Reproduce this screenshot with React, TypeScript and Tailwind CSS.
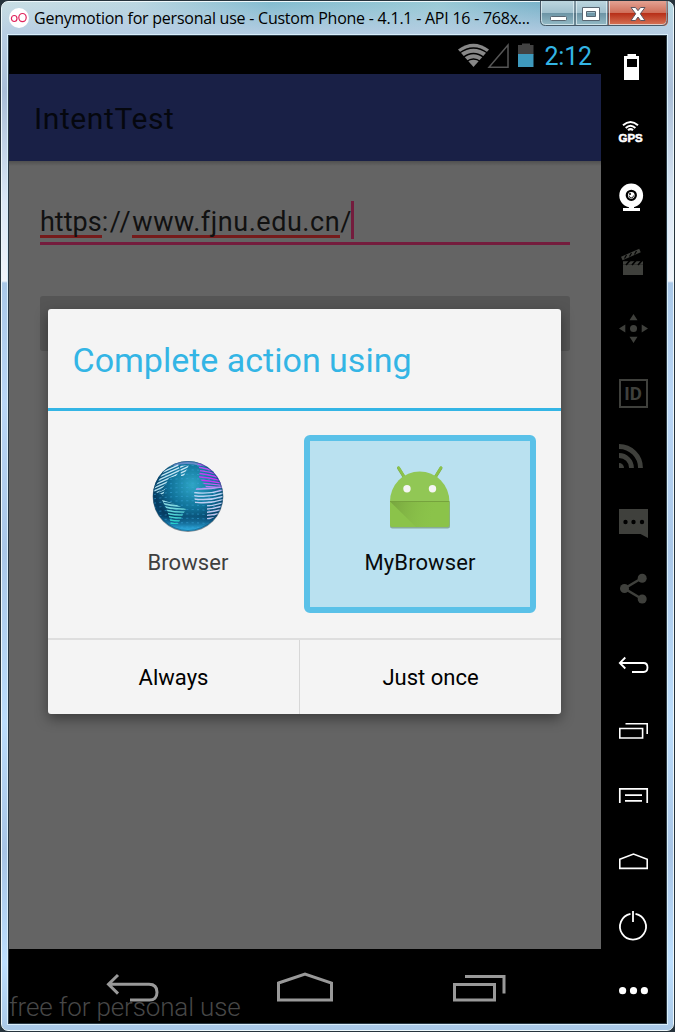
import type { ReactNode } from "react";

function Tool({ top, height, label, children }: { top: number; height: number; label: string; children: ReactNode }) {
  return (
    <button aria-label={label} className="block shrink-0">
      <svg width={65} height={height} viewBox={`601 ${top} 65 ${height}`} className="block" fill="none">
        {children}
      </svg>
    </button>
  );
}

const DIM = "#3f403c";

function Sidebar() {
  return (
    <aside className="flex w-[65px] flex-col bg-black">
      <Tool top={36} height={64} label="Battery">
        <path fill="#fff" fillRule="evenodd" d="M627.5 54h8.5v2H639v24h-15V56h3.5zM627 59v8h10v-8z" />
      </Tool>
      <Tool top={100} height={65} label="GPS">
        <g stroke="#fff" strokeWidth="2">
          <path d="M623 125.300Q630.500 118.600 638 125.300M625.700 128Q630.500 123.600 635.400 128M628 130.300Q630.500 128 633 130.300" />
        </g>
        <text x="618.500" y="142" fill="#fff" fontSize="11" fontWeight="900" textLength="24.300" lengthAdjust="spacingAndGlyphs" stroke="#fff" strokeWidth=".5" fontFamily="Liberation Sans, sans-serif">GPS</text>
      </Tool>
      <Tool top={165} height={66} label="Camera">
        <circle cx="631.200" cy="195.500" r="11.900" fill="#fff" />
        <path fill="#fff" d="M629 205h5v3h6v3h-17v-3h6z" />
        <circle cx="631.300" cy="195.300" r="4.500" stroke="#000" strokeWidth="2.300" />
        <path d="M629 195.500a2.300 2.300 0 0 0 4.600 0" stroke="#000" strokeWidth=".8" />
        <circle cx="630" cy="194" r="1" fill="#000" />
      </Tool>
      <Tool top={231} height={65} label="Capture">
        <path fill={DIM} d="M623 265h20v10h-20z" />
        <path stroke={DIM} strokeWidth="3.500" d="M623 263h20" />
        <path stroke="#000" strokeWidth="1.700" d="M626 265l4-4.500M632 265l4-4.500M638 265l4-4.500" />
        <path stroke={DIM} strokeWidth="3.800" d="M621.800 258.500L640 250.500" />
        <path stroke="#000" strokeWidth="1.200" d="M624.500 258.500l2-3.500M629.500 256.500l2-3.500M634.500 254.500l2-3.500" />
      </Tool>
      <Tool top={296} height={65} label="Move">
        <g fill={DIM}>
          <circle cx="633.500" cy="328.500" r="3.500" />
          <path d="M633.500 314l4 6.300h-8zM633.500 343l4-6.300h-8zM619 328.500l6.300-4v8zM648 328.500l-6.300-4v8z" />
        </g>
      </Tool>
      <Tool top={361} height={65} label="Identifiers">
        <rect x="620" y="380" width="27" height="27" stroke={DIM} strokeWidth="2" />
        <text x="624.200" y="400" fill={DIM} fontSize="18.500" fontWeight="700" textLength="17.600" lengthAdjust="spacingAndGlyphs" fontFamily="Roboto, sans-serif">ID</text>
      </Tool>
      <Tool top={426} height={65} label="Network">
        <path fill={DIM} d="M619 463a5 5 0 0 1 5 5h-5z" />
        <path stroke={DIM} strokeWidth="4.800" d="M619 455.500A12.500 12.500 0 0 1 631.500 468M619 446.500A21.500 21.500 0 0 1 640.500 468" />
      </Tool>
      <Tool top={491} height={65} label="Phone">
        <path fill={DIM} d="M619 509h29v29l-7.500-4H619z" />
        <g fill="#000">
          <circle cx="625.500" cy="522" r="2.200" />
          <circle cx="633.500" cy="522" r="2.200" />
          <circle cx="642" cy="522" r="2.200" />
        </g>
      </Tool>
      <Tool top={556} height={70} label="Share">
        <path stroke={DIM} strokeWidth="2.500" d="M642 578l-17.500 10.500L642 599" />
        <g fill={DIM}>
          <circle cx="624.500" cy="588.500" r="4.500" />
          <circle cx="642.200" cy="578.200" r="4.500" />
          <circle cx="642.200" cy="599" r="4.500" />
        </g>
      </Tool>
      <Tool top={626} height={72} label="Back">
        <path stroke="#fff" strokeWidth="1.800" d="M625.300 657.500l-5.500 5.500 5.500 5.500M620 663h23.500q4 0 4 4.500t-4 4.500H632" />
      </Tool>
      <Tool top={698} height={66} label="Recent apps">
        <path stroke="#fff" strokeWidth="1.600" d="M619.800 728.500h22.800v9.500h-22.800zM625.500 723.800h21.700V734" />
      </Tool>
      <Tool top={764} height={65} label="Menu">
        <path stroke="#fff" strokeWidth="1.700" d="M619.800 803v-14.200h27.400V803M625 795.200h17M625 800.800h17" />
      </Tool>
      <Tool top={829} height={65} label="Home">
        <path stroke="#fff" strokeWidth="1.600" d="M619.800 859.200l13.700-5.200 13.700 5.200v9.200h-27.400z" />
      </Tool>
      <Tool top={894} height={65} label="Power">
        <path stroke="#fff" strokeWidth="1.800" d="M630.500 913.900a13 13 0 1 0 5 0M633 911v11" />
      </Tool>
      <Tool top={959} height={64} label="More">
        <g fill="#fff">
          <circle cx="622.600" cy="990.700" r="3.600" />
          <circle cx="633.500" cy="990.700" r="3.600" />
          <circle cx="644.400" cy="990.700" r="3.600" />
        </g>
      </Tool>
    </aside>
  );
}

function TitleBar() {
  return (
    <header className="flex h-[32px] items-start pl-[7px]">
      <svg width="20" height="20" viewBox="0 0 20 20" className="mt-[6px] shrink-0" fill="none">
        <circle cx="10" cy="10" r="10" fill="#fff" />
        <g stroke="#e0245c" strokeWidth="1.200">
          <ellipse cx="5.200" cy="10.500" rx="2.800" ry="3" />
          <ellipse cx="13.500" cy="9.600" rx="3.700" ry="4.100" />
        </g>
      </svg>
      <h1 className="mt-[5px] ml-[5px] w-[505px] whitespace-nowrap font-['Open_Sans',sans-serif] text-[16px] leading-[22px] tracking-[-0.24px] text-black">
        Genymotion for personal use - Custom Phone - 4.1.1 - API 16 - 768x...
      </h1>
      <svg width="129" height="26" viewBox="0 0 129 26" className="-mt-px shrink-0" fill="none">
        <defs>
          <linearGradient id="pane" x2="0" y2="1">
            <stop stopColor="#bcd6df" />
            <stop offset=".48" stopColor="#9fbfcc" />
            <stop offset=".5" stopColor="#6d95a6" />
            <stop offset="1" stopColor="#97bdc8" />
          </linearGradient>
          <linearGradient id="close" x2="0" y2="1">
            <stop stopColor="#e3a293" />
            <stop offset=".46" stopColor="#d0705b" />
            <stop offset=".5" stopColor="#b83019" />
            <stop offset="1" stopColor="#d97a5c" />
          </linearGradient>
        </defs>
        <path fill="url(#pane)" d="M1 0h69v25H6q-5 0-5-5z" />
        <path fill="url(#close)" d="M69 0h60v20q0 5-5 5H69z" />
        <path stroke="#e6f2f6" opacity=".7" d="M2.500 0v19q0 4.500 4 4.500H34.500V0M37.500 0v23.500H67.500V0M70.500 0v23.500H123q4.500 0 4.500-4.500V0" />
        <path stroke="#475967" d="M1.500 0v19.500q0 5 5 5H123q5 0 5-5V0M36 0v24.500M69 0v24.500" />
        <rect x="11.500" y="15.500" width="16" height="4" rx="1" fill="#fff" stroke="#596672" />
        <path fill="#fff" stroke="#596672" fillRule="evenodd" d="M43.500 6.500h17v13h-17zM47.500 10.500v5h9v-5z" />
        <path fill="#fff" stroke="#5d5660" strokeLinejoin="round" d="M92 6.500h4.500l2.500 3.200 2.500-3.200h4.500l-4.700 6.300 4.700 6.700h-4.500L99 16l-2.500 3.500H92l4.700-6.700z" />
      </svg>
    </header>
  );
}

function StatusBar() {
  return (
    <div className="flex h-[38px] items-start bg-black">
      <svg width="82" height="38" viewBox="456 36 82 38" className="ml-[447px] shrink-0" fill="none">
        <path fill="#888" d="M458 49.500Q473.500 38 489 49.500L473.500 67z" />
        <path stroke="#000" strokeWidth="1.400" d="M459.500 53Q473.500 43 487.500 53M463 57.500Q473.500 49.500 484 57.500M466.500 61.500Q473.500 56.500 480.500 61.500" />
        <path stroke="#555" strokeWidth="1.500" d="M489 67.200L508 45v22.200z" />
        <path fill="#424242" d="M518 45h4v-1.500h8V45h3.500v9.500H518z" />
        <path fill="#3e99bd" d="M518 54h15.500v13H518z" />
      </svg>
      <time className="mt-[6px] ml-[6.5px] text-[25px] leading-[30px] tracking-[-0.200px] text-[#33b5e5]">2:12</time>
    </div>
  );
}

function Globe() {
  const dots = Array.from({ length: 15 }, (_, i) => 5 + i * 4.4);
  return (
    <svg width="72" height="72" viewBox="0 0 72 72" fill="none" className="block">
      <defs>
        <radialGradient id="sea" cx=".56" cy=".35" r=".7">
          <stop stopColor="#2fa6c6" />
          <stop offset=".45" stopColor="#11739a" />
          <stop offset=".78" stopColor="#063b60" />
          <stop offset="1" stopColor="#0a5787" />
        </radialGradient>
        <linearGradient id="glow" x2="0" y2="1">
          <stop offset=".78" stopColor="#20a8e0" stopOpacity="0" />
          <stop offset="1" stopColor="#38bdf0" />
        </linearGradient>
        <linearGradient id="east" x1="0" x2="0" y1="0" y2="72" gradientUnits="userSpaceOnUse">
          <stop stopColor="#b45cf0" />
          <stop offset=".3" stopColor="#c432f5" />
          <stop offset=".45" stopColor="#b9d5f5" />
          <stop offset="1" stopColor="#c6b6e6" />
        </linearGradient>
        <linearGradient id="west" x1="0" x2="0" y1="0" y2="64" gradientUnits="userSpaceOnUse">
          <stop stopColor="#d4eafa" />
          <stop offset=".6" stopColor="#a5dbe9" />
          <stop offset="1" stopColor="#20d0c8" />
        </linearGradient>
        <clipPath id="disc"><circle cx="36" cy="36" r="35" /></clipPath>
        <clipPath id="eastland"><path d="M44 0h7l21 18v34L55 61V45l-12-2-1-10 3-6h9l-7-10 1-7z" /></clipPath>
        <clipPath id="westland"><path d="M14 7l12-3 2 6-4 6-7 2-3 6-8 9-5-2zM28 6l9-1-3 6-2 5h-3zM10 40l10 3 14 6-8 15h-7l-4-14zM7 32l6-3-2 7z" /></clipPath>
      </defs>
      <circle cx="36" cy="36.500" r="35.400" fill="#778792" />
      <g clipPath="url(#disc)">
        <path fill="url(#sea)" d="M0 0h72v72H0z" />
        <path fill="url(#glow)" d="M0 0h72v72H0z" />
        <path fill="#7b94d4" opacity=".8" d="M20 4Q36-2 51 4l-2 2q-15-4-27 0z" />
        <g stroke="#3aa6dd" strokeWidth="1" strokeDasharray="2 3.400" opacity=".6">
          {dots.map((y) => <path key={y} d={`M2 ${y + 3}Q36 ${y - 2} 70 ${y + 3}`} />)}
        </g>
        <g clipPath="url(#eastland)" stroke="url(#east)" strokeWidth="1.400">
          {Array.from({ length: 20 }, (_, i) => (
            <path key={i} d={`M38 ${i * 3.2}Q56 ${i * 3.2 + (i < 10 ? 1 : 3)} 71 ${i * 3.2 + (i < 9 ? 10 - i : -2)}`} />
          ))}
        </g>
        <g clipPath="url(#westland)" stroke="url(#west)" strokeWidth="1.400">
          {Array.from({ length: 12 }, (_, i) => <path key={i} d={`M0 ${14 + i * 3}L42 ${-5 + i * 3}`} />)}
          {Array.from({ length: 10 }, (_, i) => <path key={`s${i}`} d={`M6 ${36 + i * 3}Q20 ${41 + i * 3} 38 ${40 + i * 3}`} />)}
        </g>
        <circle cx="36" cy="36" r="34.500" stroke="#06466e" strokeOpacity=".5" />
      </g>
    </svg>
  );
}

function Robot() {
  return (
    <svg width="66" height="68" viewBox="387 463 66 68" fill="none" className="block">
      <defs>
        <linearGradient id="fold" x1="390" y1="502" x2="436" y2="514" gradientUnits="userSpaceOnUse">
          <stop stopColor="#739f3c" stopOpacity=".85" />
          <stop offset="1" stopColor="#8bc34a" stopOpacity="0" />
        </linearGradient>
      </defs>
      <path fill="#6d8f68" opacity=".65" d="M390 502h60v24q0 2.500-2.500 2.500h-55q-2.500 0-2.500-2.500z" />
      <path stroke="#79a64a" strokeWidth="3" strokeLinecap="round" d="M398.500 468l6.500 10.500M441 468l-6.500 10.500" />
      <path stroke="#8bc34a" strokeWidth="2.500" strokeLinecap="round" d="M398.500 467.500l6.500 10.500M441 467.500l-6.500 10.500" />
      <path fill="#91c755" d="M390 501.500a29.700 30 0 0 1 59.400 0z" />
      <path fill="#8bc34a" d="M390 501h59.400v24q0 2-2 2H392q-2 0-2-2z" />
      <path fill="url(#fold)" d="M390.500 502H449v25h-33z" />
      <path stroke="#76a33d" d="M390 501.500h59.400" />
      <circle cx="407" cy="488.700" r="3.700" fill="#f5f5f5" />
      <circle cx="432.500" cy="488.700" r="3.700" fill="#f5f5f5" />
    </svg>
  );
}

function Chooser() {
  return (
    <section className="absolute top-[235px] left-[39px] flex h-[404.500px] w-[513px] flex-col rounded-[3px] bg-[#f4f4f4] shadow-[0_5px_13px_rgba(0,0,0,0.4)]">
      <h2 className="h-[102px] border-b-[3px] border-[#33b5e5] pt-[30px] pl-[24.500px] text-[34px] leading-[42px] whitespace-nowrap text-[#33b5e5]">
        Complete action using
      </h2>
      <div className="flex h-[227px] pt-[24px] pl-[24px]">
        <button className="flex h-[178px] w-[232px] flex-col items-center pt-[25px]">
          <Globe />
          <span className="mt-[17px] text-[22px] leading-[28px] tracking-[0.080px] text-[#3f3f3f]">Browser</span>
        </button>
        <button className="flex h-[178px] w-[232px] flex-col items-center rounded-[6px] border-[6px] border-[#5ac1e8] bg-[#bae1f0] pt-[22px]">
          <Robot />
          <span className="mt-[18px] text-[22px] leading-[28px] tracking-[0.080px] text-[#080b0c]">MyBrowser</span>
        </button>
      </div>
      <div className="flex flex-1 border-t-2 border-[#dedede] text-[22px] text-black">
        <button className="w-[252px] border-r border-[#d7d7d7] pt-[1px]">Always</button>
        <button className="flex-1 pt-[1px]">Just once</button>
      </div>
    </section>
  );
}

function Screen() {
  return (
    <main className="relative flex w-[592px] flex-col bg-[#646464] font-[Roboto,sans-serif]">
      <StatusBar />
      <div className="relative h-[875px]">
        <div className="flex h-[87px] items-center bg-[#192046] pt-[3px] pl-[25px] text-[30px] leading-[36px] tracking-[0.600px] text-[#05070e]">IntentTest</div>
        <div className="h-[5px] bg-linear-to-b from-[#505050] to-[#646464]" />
        <div className="mx-[31px] mt-[33px] h-[46px] border-b-[3px] border-[#741c3d] text-[27px] leading-[46px] whitespace-nowrap text-[#111]">
          <div className="flex h-[43px] items-start">
            <span className="h-[39px] border-b-[3px] border-[#751b1b]">https</span>
            <span className="tracking-[1.600px]">://</span>
            <span className="h-[39px] border-b-[3px] border-[#751b1b] tracking-[0.540px]">www.fjnu.edu.cn</span>
            <span>/</span>
            <i className="mt-[2px] h-[38px] w-[3px] bg-[#741c3d]" />
          </div>
        </div>
        <div className="mx-[31px] mt-[51px] h-[55px] rounded-[3px] bg-[#555]" />
        <Chooser />
      </div>
      <nav className="relative h-[74px] bg-black">
        <svg width="592" height="74" viewBox="9 949 592 74" fill="none" stroke="#999" strokeWidth="3" className="block">
          <path d="M118 975l-9.500 9.300 9.500 9.300M109 984.300h40q8 0 8 8t-8 7.700H130" />
          <path d="M278.500 983l26.500-9 26.500 9v17h-53z" />
          <path d="M454.500 984.500h40v15.500h-40zM465 976.500h39V993.500" />
        </svg>
        <span className="absolute top-[42px] left-[0px] text-[26px] leading-[32px] font-light tracking-[-0.130px] whitespace-nowrap text-[#474747]">free for personal use</span>
      </nav>
    </main>
  );
}

export default function App() {
  return (
    <div className="h-[1032px] w-[675px] overflow-hidden bg-[#26333c] p-px">
      <div className="flex h-[1030px] flex-col rounded-[7px] border border-[#eef8fb] bg-[linear-gradient(90deg,#c9dfe4_0%,#bbd7e1_20%,#83bccf_40%,#99cad5_65%,#79b3c9_80%,#b6d9e2_100%)]">
        <div className="flex flex-1 flex-col items-start rounded-[6px] bg-[linear-gradient(180deg,rgba(255,255,255,0)_0px,#b7cde3_34px,#a9bed7_90px,#dbe8f6_200px,#f0f4fa_279px,#a9c8e8_281px,#b9d6f6_400px,#a9c7e8_550px,#bbddfc_720px,#a7c4e5_850px,#bcdfff_960px,#a9c8e6_1029px)]">
          <TitleBar />
          <div className="ml-[5px] flex w-[661px] border border-[#d9eefa] bg-[#283844] p-px">
            <Screen />
            <Sidebar />
          </div>
        </div>
      </div>
    </div>
  );
}
